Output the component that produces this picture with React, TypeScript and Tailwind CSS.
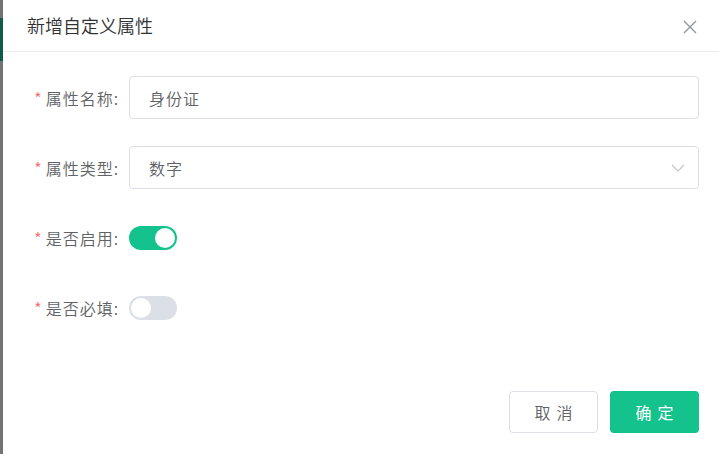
import { useState } from "react";

const font = { fontFamily: '"Noto Sans CJK SC", "Noto Sans", sans-serif' };

function Label({ text }: { text: string }) {
  return (
    <div className="w-[126px] shrink-0 pr-[10px] text-right text-[16px] font-[350] tracking-[1px] text-[#606266]">
      <span className="mr-[3px] text-[#f56c6c]">*</span>
      {text}:
    </div>
  );
}

function Toggle({ on, onClick }: { on: boolean; onClick: () => void }) {
  return (
    <button
      onClick={onClick}
      className={`relative h-[24px] w-[48px] rounded-full transition ${
        on ? "bg-[#13c28c]" : "bg-[#dcdfe6]"
      }`}
    >
      <span
        className={`absolute top-[2px] h-[20px] w-[20px] rounded-full bg-white transition-all ${
          on ? "left-[26px]" : "left-[2px]"
        }`}
      />
    </button>
  );
}

export default function App() {
  const [enabled, setEnabled] = useState(true);
  const [required, setRequired] = useState(false);

  return (
    <div className="flex h-[454px] w-[719px] bg-white" style={font}>
      {/* left edge of page behind */}
      <div className="flex w-[3px] shrink-0 flex-col bg-[#737373]">
        <div className="mt-[18px] h-[43px] bg-[#0f5c48]" />
      </div>

      <div className="flex flex-1 flex-col">
        {/* header */}
        <div className="flex h-[52px] items-center justify-between border-b border-[#ebeef5] pl-[24px] pr-[22px]">
          <span className="text-[18px] font-[350] text-[#303133]">新增自定义属性</span>
          <svg width="14" height="14" viewBox="0 0 14 14" className="mt-[2px]">
            <path d="M1 1L13 13M13 1L1 13" stroke="#909399" strokeWidth="1.3" />
          </svg>
        </div>

        {/* form */}
        <div className="flex flex-col pt-[24px] pr-[20px]">
          <div className="flex h-[43px] items-center">
            <Label text="属性名称" />
            <input
              defaultValue="身份证"
              className="h-[43px] flex-1 rounded-[4px] border border-[#dcdfe6] px-[19px] text-[16px] font-[350] tracking-[1px] text-[#606266] outline-none"
            />
          </div>

          <div className="mt-[27px] flex h-[43px] items-center">
            <Label text="属性类型" />
            <div className="flex h-[43px] flex-1 items-center justify-between rounded-[4px] border border-[#dcdfe6] pl-[19px] pr-[12px] text-[16px] font-[350] tracking-[1px] text-[#606266]">
              <span>数字</span>
              <svg width="16" height="16" viewBox="0 0 16 16">
                <path d="M2 5L8 11L14 5" fill="none" stroke="#c0c4cc" strokeWidth="1.2" />
              </svg>
            </div>
          </div>

          <div className="mt-[27px] flex h-[43px] items-center">
            <Label text="是否启用" />
            <Toggle on={enabled} onClick={() => setEnabled(!enabled)} />
          </div>

          <div className="mt-[27px] flex h-[43px] items-center">
            <Label text="是否必填" />
            <Toggle on={required} onClick={() => setRequired(!required)} />
          </div>
        </div>

        {/* footer */}
        <div className="mt-auto mb-[21px] flex justify-end gap-[12px] pr-[20px]">
          <button className="h-[42px] w-[89px] rounded-[4px] border border-[#dcdfe6] bg-white pl-[6px] text-[16px] font-[350] tracking-[6px] text-[#606266]">
            取消
          </button>
          <button className="h-[42px] w-[89px] rounded-[4px] bg-[#13c28c] pl-[6px] text-[16px] tracking-[6px] text-white">
            确定
          </button>
        </div>
      </div>
    </div>
  );
}
